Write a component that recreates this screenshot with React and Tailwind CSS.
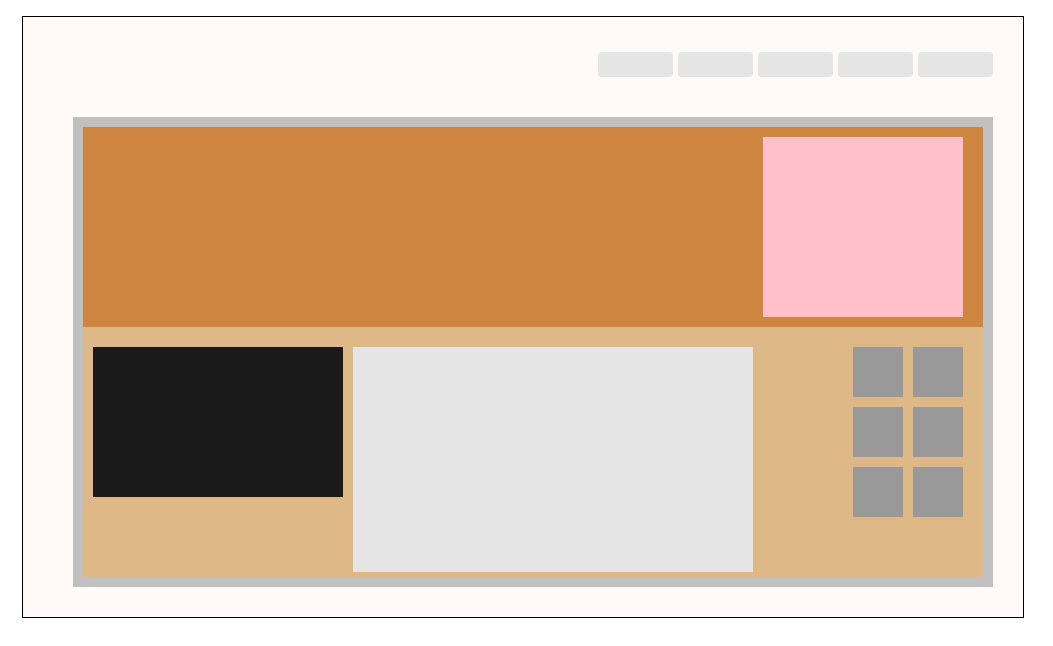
import React from 'react';

const tabs = [1, 2, 3, 4, 5];
const tiles = [1, 2, 3, 4, 5, 6];

const App = () => {
    return (
        <div className="min-h-screen bg-white pl-[22px] pt-[16px]">
            <div className="w-[1002px] h-[602px] border border-black bg-[#fffafa] flex flex-col">
                {/* Top buttons */}
                <div className="flex justify-end gap-[5px] pt-[35px] pr-[30px]">
                    {tabs.map(t => (
                        <div key={t} className="w-[75px] h-[25px] rounded-[4px] bg-[#e5e5e5]"></div>
                    ))}
                </div>

                {/* Main panel */}
                <div className="ml-[50px] mt-[40px] w-[920px] h-[470px] border-[10px] border-[#c0c0c0] flex flex-col">
                    <div className="h-[200px] bg-[#cd853f] flex justify-end pt-[10px] pr-[20px]">
                        <div className="w-[200px] h-[180px] bg-[#ffc0cb]"></div>
                    </div>
                    <div className="h-[250px] bg-[#deb887] flex items-start pt-[20px] pl-[10px] pr-[20px]">
                        <div className="w-[250px] h-[150px] bg-[#1a1a1a]"></div>
                        <div className="ml-[10px] w-[400px] h-[225px] bg-[#e5e5e5]"></div>
                        <div className="ml-auto grid grid-cols-2 gap-[10px]">
                            {tiles.map(t => (
                                <div key={t} className="w-[50px] h-[50px] bg-[#999999]"></div>
                            ))}
                        </div>
                    </div>
                </div>
            </div>
        </div>
    );
};

export default App;
